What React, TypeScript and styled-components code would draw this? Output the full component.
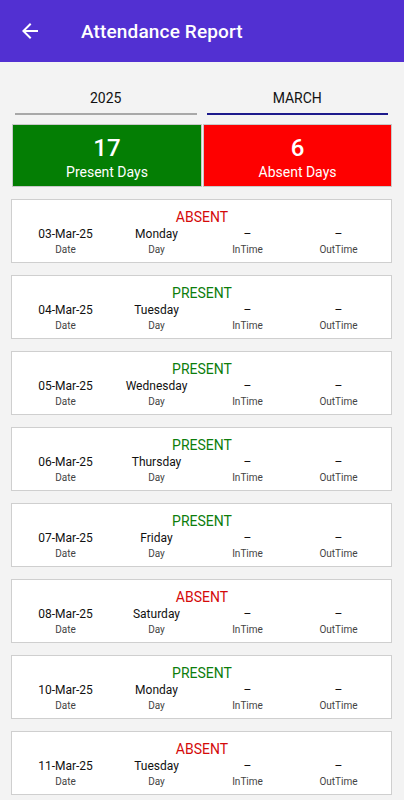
import React from "react";
import styled, { createGlobalStyle } from "styled-components";

const GlobalStyle = createGlobalStyle`
  html, body { margin: 0; padding: 0; background: #f3f3f3; }
  body { font-family: Roboto, "Noto Sans", Arial, sans-serif; }
  * { box-sizing: border-box; }
`;

const Page = styled.div`
  width: 404px;
  min-height: 800px;
  background: #f3f3f3;
  display: flex;
  flex-direction: column;
`;

const AppBar = styled.header`
  height: 62px;
  background: #5230d2;
  display: flex;
  align-items: center;
  padding-left: 18px;
  color: #fff;
`;

const BackButton = styled.button`
  width: 24px;
  height: 24px;
  padding: 0;
  border: none;
  background: transparent;
  color: #fff;
  display: flex;
  align-items: center;
  justify-content: center;
`;

const Title = styled.h1`
  margin: 0 0 0 39px;
  font-size: 19px;
  font-weight: 500;
  letter-spacing: 0.15px;
  color: #fff;
`;

const Tabs = styled.div`
  display: grid;
  grid-template-columns: 1fr 1fr;
  column-gap: 10px;
  padding: 24px 16px 0 15px;
`;

const Tab = styled.div<{ $active?: boolean }>`
  height: 29px;
  display: flex;
  align-items: flex-start;
  justify-content: center;
  font-size: 14px;
  line-height: 16px;
  color: #111;
  border-bottom: 2px solid ${(p) => (p.$active ? "#1c1a8c" : "#a8a8a8")};
  padding-top: 4px;
`;

const Stats = styled.div`
  display: grid;
  grid-template-columns: 190px 1fr;
  column-gap: 1px;
  margin: 9px 12px 0 12px;
`;

const StatBox = styled.div<{ $bg: string }>`
  height: 63px;
  background: ${(p) => p.$bg};
  border: 1px solid #c9c9c9;
  color: #fff;
  display: flex;
  flex-direction: column;
  align-items: center;
  padding-top: 9px;
`;

const StatNumber = styled.div`
  font-size: 24px;
  font-weight: 500;
  line-height: 28px;
`;

const StatLabel = styled.div`
  font-size: 14px;
  line-height: 16px;
  margin-top: 2px;
`;

const List = styled.div`
  display: flex;
  flex-direction: column;
  gap: 12px;
  padding: 12px 12px 0 11px;
`;

const Card = styled.div`
  height: 64px;
  background: #fff;
  border: 1px solid #cfcfcf;
  padding: 9px 7px 0 8px;
  display: flex;
  flex-direction: column;
`;

const Status = styled.div<{ $present: boolean }>`
  text-align: center;
  font-size: 14px;
  line-height: 16px;
  color: ${(p) => (p.$present ? "#0c7d0c" : "#d40a0a")};
`;

const Fields = styled.div`
  display: grid;
  grid-template-columns: repeat(4, 1fr);
  margin-top: 2px;
`;

const Field = styled.div`
  display: flex;
  flex-direction: column;
  align-items: center;
`;

const Value = styled.div`
  font-size: 12px;
  line-height: 14px;
  color: #111;
`;

const Label = styled.div`
  font-size: 10px;
  line-height: 12px;
  margin-top: 3px;
  color: #444;
`;

type Row = { date: string; day: string; present: boolean };

const rows: Row[] = [
  { date: "03-Mar-25", day: "Monday", present: false },
  { date: "04-Mar-25", day: "Tuesday", present: true },
  { date: "05-Mar-25", day: "Wednesday", present: true },
  { date: "06-Mar-25", day: "Thursday", present: true },
  { date: "07-Mar-25", day: "Friday", present: true },
  { date: "08-Mar-25", day: "Saturday", present: false },
  { date: "10-Mar-25", day: "Monday", present: true },
  { date: "11-Mar-25", day: "Tuesday", present: false },
];

export default function App() {
  return (
    <Page>
      <GlobalStyle />
      <AppBar>
        <BackButton aria-label="Back">
          <svg width="24" height="24" viewBox="0 0 24 24" fill="currentColor">
            <path d="M20 11H7.83l5.59-5.59L12 4l-8 8 8 8 1.41-1.41L7.83 13H20v-2z" />
          </svg>
        </BackButton>
        <Title>Attendance Report</Title>
      </AppBar>
      <Tabs>
        <Tab>2025</Tab>
        <Tab $active>MARCH</Tab>
      </Tabs>
      <Stats>
        <StatBox $bg="#047e04">
          <StatNumber>17</StatNumber>
          <StatLabel>Present Days</StatLabel>
        </StatBox>
        <StatBox $bg="#fe0000">
          <StatNumber>6</StatNumber>
          <StatLabel>Absent Days</StatLabel>
        </StatBox>
      </Stats>
      <List>
        {rows.map((r) => (
          <Card key={r.date}>
            <Status $present={r.present}>{r.present ? "PRESENT" : "ABSENT"}</Status>
            <Fields>
              <Field>
                <Value>{r.date}</Value>
                <Label>Date</Label>
              </Field>
              <Field>
                <Value>{r.day}</Value>
                <Label>Day</Label>
              </Field>
              <Field>
                <Value>–</Value>
                <Label>InTime</Label>
              </Field>
              <Field>
                <Value>–</Value>
                <Label>OutTime</Label>
              </Field>
            </Fields>
          </Card>
        ))}
      </List>
    </Page>
  );
}
